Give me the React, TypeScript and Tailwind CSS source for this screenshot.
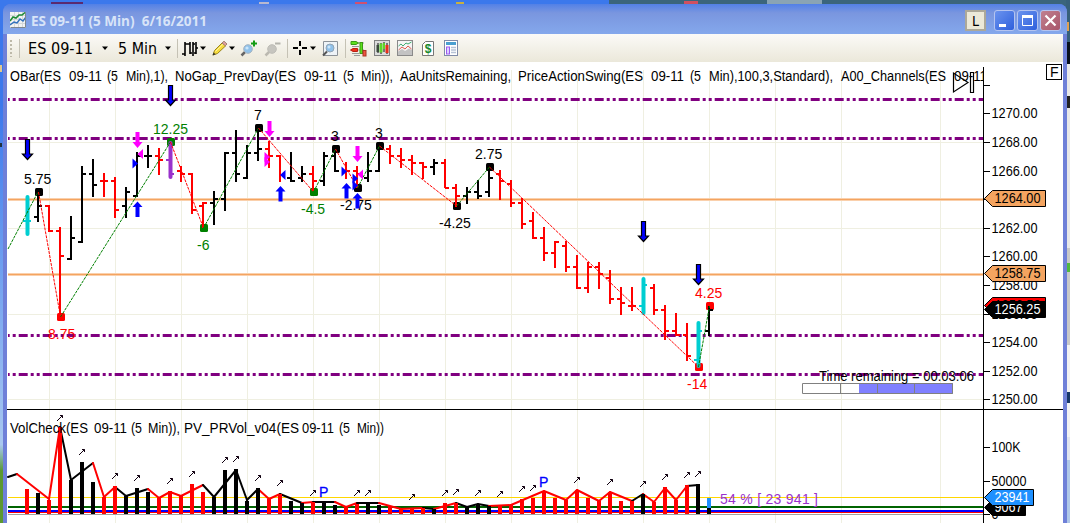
import React from "react";

type Color = "k" | "r" | "c" | "p";

const COLORS: Record<string, string> = {
    k: "#000000",
    r: "#ff0000",
    c: "#00ced1",
    p: "#9932cc",
    g: "#008000",
};

const FONT = "'Liberation Sans', Arial, sans-serif";

// color, high, low, open, close (all y values)
const BARS: [Color, number, number, number, number][] = [
    ["c", 197, 234, 221, 221],
    ["k", 192, 222, 217, 206],
    ["r", 205, 232, 206, 231],
    ["r", 227, 317, 231, 256],
    ["k", 216, 260, 259, 238],
    ["k", 166, 243, 242, 174],
    ["k", 159, 197, 174, 185],
    ["r", 173, 197, 181, 181],
    ["r", 177, 218, 181, 210],
    ["k", 187, 218, 206, 192],
    ["k", 152, 197, 196, 156],
    ["k", 145, 168, 156, 156],
    ["r", 148, 175, 156, 160],
    ["p", 143, 177, 160, 174],
    ["r", 166, 182, 171, 174],
    ["r", 173, 214, 174, 210],
    ["r", 202, 228, 206, 203],
    ["k", 191, 225, 203, 199],
    ["k", 152, 211, 199, 153],
    ["k", 130, 182, 153, 174],
    ["k", 145, 179, 178, 153],
    ["k", 128, 161, 153, 149],
    ["r", 141, 168, 149, 156],
    ["r", 155, 182, 156, 175],
    ["k", 152, 182, 178, 181],
    ["k", 166, 182, 178, 174],
    ["r", 166, 191, 174, 181],
    ["k", 152, 186, 181, 156],
    ["k", 149, 172, 156, 171],
    ["r", 162, 179, 171, 171],
    ["r", 166, 188, 171, 174],
    ["k", 152, 182, 178, 171],
    ["k", 147, 172, 171, 149],
    ["r", 145, 164, 149, 156],
    ["r", 148, 168, 156, 160],
    ["r", 155, 175, 160, 163],
    ["r", 162, 179, 163, 167],
    ["k", 159, 175, 167, 163],
    ["r", 159, 188, 163, 188],
    ["r", 184, 207, 188, 196],
    ["k", 187, 204, 196, 192],
    ["k", 180, 199, 192, 196],
    ["k", 167, 197, 192, 178],
    ["r", 170, 200, 174, 181],
    ["r", 180, 207, 184, 203],
    ["r", 198, 229, 203, 224],
    ["r", 212, 239, 221, 238],
    ["r", 227, 261, 238, 253],
    ["r", 241, 268, 253, 242],
    ["r", 241, 272, 246, 267],
    ["r", 255, 289, 267, 288],
    ["r", 262, 293, 288, 267],
    ["r", 262, 289, 267, 274],
    ["r", 270, 304, 278, 299],
    ["r", 287, 315, 299, 303],
    ["r", 287, 311, 306, 306],
    ["c", 279, 313, 306, 285],
    ["r", 284, 315, 288, 310],
    ["r", 305, 340, 310, 331],
    ["r", 313, 336, 331, 335],
    ["r", 323, 361, 335, 356],
    ["c", 323, 366, 360, 331],
    ["k", 306, 336, 331, 310],
];

// x, y, dot color, label, label x, label baseline
const SWINGS: [number, number, string, string, number, number][] = [
    [38, 192, "k", "5.75", 24, 184],
    [60, 317, "r", "8.75", 48, 339],
    [170, 142, "g", "12.25", 153, 134],
    [203, 228, "g", "-6", 197, 250],
    [258, 128, "k", "7", 254, 120],
    [313, 192, "g", "-4.5", 301, 214],
    [335, 149, "k", "3", 331, 141],
    [357, 188, "k", "-2.75", 340, 210],
    [379, 146, "k", "3", 375, 138],
    [456, 206, "k", "-4.25", 439, 228],
    [489, 167, "k", "2.75", 475, 159],
    [698, 367, "r", "-14", 687, 389],
    [709, 306, "r", "4.25", 695, 298],
];

// volume bar tops, one for each price bar
const VOLUME: [Color, number][] = [
    ["r", 489], ["k", 493], ["r", 500], ["r", 427], ["k", 480], ["k", 462],
    ["k", 482], ["r", 497], ["r", 486], ["k", 496], ["k", 488], ["k", 492],
    ["r", 498], ["r", 491], ["r", 496], ["r", 484], ["r", 492], ["k", 497],
    ["k", 470], ["k", 469], ["k", 501], ["k", 488], ["r", 499], ["r", 494],
    ["k", 501], ["k", 503], ["r", 502], ["k", 502], ["k", 505], ["r", 507],
    ["r", 504], ["k", 503], ["k", 505], ["r", 506], ["r", 509], ["r", 508],
    ["r", 508], ["k", 509], ["r", 503], ["r", 503], ["k", 507], ["k", 504],
    ["k", 506], ["r", 505], ["r", 505], ["r", 499], ["r", 498], ["r", 491],
    ["r", 498], ["r", 500], ["r", 490], ["r", 498], ["r", 501], ["r", 492],
    ["r", 501], ["r", 501], ["k", 494], ["r", 502], ["r", 487], ["r", 500],
    ["r", 485], ["k", 484], ["k", 508],
];

// each point carries the color of the segment that leads to it
const VOLUME_LINE: [number, number, Color][] = [
    [8, 477, "k"], [17, 474, "k"], [49, 499, "r"], [60, 427, "r"],
    [71, 480, "k"], [93, 463, "k"], [104, 497, "r"], [115, 487, "r"],
    [126, 496, "k"], [148, 489, "k"], [159, 498, "r"], [170, 492, "r"],
    [181, 496, "r"], [203, 485, "r"], [214, 497, "k"], [236, 470, "k"],
    [247, 500, "k"], [258, 489, "k"], [269, 499, "r"], [280, 494, "r"],
    [302, 503, "k"], [313, 502, "r"], [335, 502, "k"], [346, 507, "r"],
    [357, 503, "r"], [379, 503, "k"], [401, 509, "r"], [423, 508, "r"],
    [434, 509, "k"], [456, 503, "r"], [467, 507, "k"], [478, 504, "k"],
    [489, 506, "k"], [511, 505, "r"], [544, 491, "r"], [566, 500, "r"],
    [577, 490, "r"], [599, 501, "r"], [610, 492, "r"], [632, 501, "r"],
    [643, 494, "k"], [654, 502, "r"], [665, 488, "r"], [676, 500, "r"],
    [687, 486, "r"], [698, 485, "k"],
];

const VOLUME_MARKS: [number, number][] = [
    [60, 418], [82, 452], [115, 476], [137, 478], [170, 481], [192, 474],
    [225, 460], [236, 459], [258, 478], [280, 483], [313, 493], [357, 493],
    [368, 493], [412, 497], [445, 493], [456, 492], [478, 493], [500, 494],
    [522, 489], [533, 488], [577, 480], [610, 482], [643, 484], [665, 477],
    [687, 475], [698, 474],
];

const GRID_X = [49, 115, 181, 247, 313, 379, 445, 511, 577, 643, 709, 775, 841, 940];
const GRID_Y = [142, 228, 314, 399];

// 1264.00 is covered by its price tag
const AXIS: [string, number][] = [
    ["", 85], ["1270.00", 113], ["1268.00", 142], ["1266.00", 171],
    ["", 199], ["1262.00", 228], ["1260.00", 256], ["1258.00", 285],
    ["1256.00", 314], ["1254.00", 342], ["1252.00", 371], ["1250.00", 399],
    ["100K", 447], ["50000", 481], ["0", 514],
];

// text, x, width
const HEADER: [string, number, number][] = [
    ["OBar(ES", 10, 51], ["09-11", 69, 33], ["(5", 107, 11], ["Min),1),", 126, 42],
    ["NoGap_PrevDay(ES", 175, 121], ["09-11", 304, 33], ["(5", 343, 11],
    ["Min)),", 361, 32], ["AaUnitsRemaining,", 400, 111],
    ["PriceActionSwing(ES", 518, 125], ["09-11", 651, 33], ["(5", 690, 11],
    ["Min),100,3,Standard),", 709, 124], ["A00_Channels(ES", 841, 105],
    ["09-11", 954, 33],
];

const VOLUME_HEADER: [string, number, number][] = [
    ["VolCheck(ES", 10, 78], ["09-11", 94, 33], ["(5", 131, 11], ["Min)),", 148, 32],
    ["PV_PRVol_v04(ES", 184, 115], ["09-11", 302, 32], ["(5", 339, 11],
    ["Min))", 357, 27],
];

const barX = (i: number) => 27 + i * 11;

const SmallText: React.FC<{
    x: number;
    y: number;
    w?: number;
    fill?: string;
    children: React.ReactNode;
}> = ({ x, y, w, fill = "#000", children }) => (
    <text
        x={x}
        y={y}
        fill={fill}
        fontFamily={FONT}
        fontSize={14}
        textLength={w}
        lengthAdjust="spacingAndGlyphs"
    >
        {children}
    </text>
);

const PriceBar: React.FC<{ i: number; bar: (typeof BARS)[number] }> = ({ i, bar }) => {
    const [color, high, low, open, close] = bar;
    const x = barX(i);
    const thick = color === "c" || color === "p";
    return (
        <g stroke={COLORS[color]} strokeWidth={2} shapeRendering="crispEdges">
            <path d={`M${x - 4} ${open}H${x}M${x} ${close}H${x + 4}`} />
            <line
                x1={thick ? x + 0.5 : x}
                x2={thick ? x + 0.5 : x}
                y1={high}
                y2={low}
                strokeWidth={thick ? 4 : 2}
                strokeLinecap={thick ? "round" : "butt"}
                shapeRendering={thick ? "auto" : "crispEdges"}
            />
        </g>
    );
};

const SignalArrow: React.FC<{ x: number; y: number }> = ({ x, y }) => (
    <path
        d={`M${x - 1.5} ${y + 0.5}h4v14.5h3l-5 5.5l-5-5.5h3z`}
        fill="#0000ff"
        stroke="#000"
        strokeWidth={1.2}
    />
);

const SmallArrow: React.FC<{ x: number; y: number; up?: boolean }> = ({ x, y, up }) => (
    <path
        d={
            up
                ? `M${x + 0.5} ${y}l5 5.5h-3v10h-4v-10h-3z`
                : `M${x - 1.5} ${y}h4v10h3l-5 6l-5-6h3z`
        }
        fill={up ? "#0000ff" : "#ff00ff"}
    />
);

const Tri: React.FC<{ x: number; y: number; left?: boolean; fill: string }> = ({
    x,
    y,
    left,
    fill,
}) => (
    <path
        d={left ? `M${x} ${y}l5.5-5v10z` : `M${x} ${y}l-5.5-5v10z`}
        fill={fill}
    />
);

const PriceTag: React.FC<{
    y: number;
    right: number;
    fill: string;
    color: string;
    text: string;
}> = ({ y, right, fill, color, text }) => (
    <g>
        <path
            d={`M984.5 ${y + 8.5}l8-8H${right}v16H992.5z`}
            fill={fill}
            stroke="#000"
        />
        <SmallText x={994.5} y={y + 13} w={text.length > 5 ? 46 : text.length * 7} fill={color}>
            {text}
        </SmallText>
    </g>
);

const Chart: React.FC = () => (
    <svg width={1056} height={461} viewBox="7 62 1056 461" className="block bg-white">
        <g fill="#efefe1">
            {GRID_X.map((x) => (
                <rect key={x} x={x} y={70} width={1} height={453} />
            ))}
            {GRID_Y.map((y) => (
                <rect key={y} x={8} y={y} width={975} height={1} />
            ))}
        </g>

        {/* channel lines */}
        {[199, 274].map((y) => (
            <g key={y}>
                <rect x={8} y={y - 1} width={975} height={3} fill="#fad0ac" />
                <rect x={8} y={y} width={975} height={1} fill="#f4a460" />
            </g>
        ))}
        {[99.5, 138.5, 335.5, 374.5].map((y) => (
            <line
                key={y}
                x1={8}
                x2={983}
                y1={y}
                y2={y}
                stroke="#800080"
                strokeWidth={3}
                strokeDasharray="9 3 3 3 3 3"
                strokeDashoffset={13.3}
            />
        ))}

        {/* swing dots sit under the bars, swing legs over them */}
        {SWINGS.map(([x, y, c]) => (
            <rect key={x} x={x - 3} y={y - 4} width={8} height={8} rx={1.5} fill={COLORS[c]} />
        ))}
        {BARS.map((bar, i) => (
            <PriceBar key={i} i={i} bar={bar} />
        ))}
        <line x1={8} y1={249} x2={38} y2={192} stroke="#008000" strokeDasharray="3 1" />
        {SWINGS.slice(1).map(([x, y], i) => {
            const [px, py] = SWINGS[i];
            return (
                <line
                    key={x}
                    x1={px + 0.5}
                    y1={py}
                    x2={x + 0.5}
                    y2={y}
                    stroke={y > py ? "#ff0000" : "#008000"}
                    strokeDasharray="3 1"
                />
            );
        })}

        <SignalArrow x={27} y={139} />
        <SignalArrow x={170} y={85} />
        <SignalArrow x={643} y={221} />
        <SignalArrow x={698} y={264} />
        <SmallArrow x={137} y={132} />
        <SmallArrow x={269} y={121} />
        <SmallArrow x={357} y={146} />
        <SmallArrow x={137} y={201.5} up />
        <SmallArrow x={280} y={186} up />
        <SmallArrow x={346} y={183} up />
        <Tri x={137.5} y={154} left fill="#ff00ff" />
        <Tri x={138} y={163.5} fill="#0000ff" />
        <Tri x={270} y={157} fill="#ff00ff" />
        <Tri x={270} y={162} fill="#ff00ff" />
        <Tri x={280} y={175} left fill="#0000ff" />
        <Tri x={347} y={171.5} fill="#0000ff" />
        <Tri x={358} y={178.5} fill="#0000ff" />
        <Tri x={358} y={185.5} fill="#0000ff" />
        <Tri x={357.5} y={174.5} left fill="#ff00ff" />

        {SWINGS.map(([x, , c, label, lx, ly]) => (
            <text key={x} x={lx} y={ly} fontSize={14} fontFamily={FONT} fill={COLORS[c]}>
                {label}
            </text>
        ))}
        <SmallArrow x={357} y={193} up />

        {/* bar timer */}
        <rect x={859} y={383} width={94} height={11} fill="#8080ff" />
        <path
            d="M802.5 383.5H952.5V393.5H802.5ZM840.5 383.5V393.5M877.5 383.5V393.5M914.5 383.5V393.5"
            fill="none"
            stroke="#808080"
        />
        <SmallText x={819} y={381} w={155}>
            Time remaining = 00:03:06
        </SmallText>

        {/* volume panel */}
        <rect x={8} y={497} width={975} height={1} fill="#ffd700" />
        <rect x={8} y={506} width={975} height={2} fill="#006400" />
        <rect x={8} y={510} width={975} height={2} fill="#0000ff" />
        <rect x={8} y={512} width={975} height={1} fill="#ff0000" />
        <rect x={8} y={514} width={975} height={1} fill="#a0a0a0" />
        {VOLUME_LINE.slice(1).map(([x, y, c], i) => (
            <line
                key={x}
                x1={VOLUME_LINE[i][0]}
                y1={VOLUME_LINE[i][1]}
                x2={x}
                y2={y}
                stroke={COLORS[c]}
                strokeWidth={2}
                strokeLinecap="round"
            />
        ))}
        {VOLUME.map(([c, top], i) => (
            <rect
                key={i}
                x={barX(i) - 2}
                y={top}
                width={4}
                height={514 - top}
                fill={COLORS[c]}
            />
        ))}
        <rect x={707} y={498} width={4} height={10} fill="#1e90ff" />
        {VOLUME_MARKS.map(([x, y]) => (
            <path
                key={x}
                d={`M${x - 3} ${y + 3}l5.5-5.5M${x} ${y - 2.5}h2.5v2.5`}
                fill="none"
                stroke="#100010"
            />
        ))}
        <g fontFamily={FONT} fontSize={14}>
            <text x={319} y={497} fill="#0000ff" stroke="#0000ff" strokeWidth={0.3}>
                P
            </text>
            <text x={539} y={487} fill="#0000ff" stroke="#0000ff" strokeWidth={0.3}>
                P
            </text>
            <text x={720} y={504} fill="#9932cc" textLength={98}>
                54 % [ 23 941 ]
            </text>
        </g>

        {HEADER.map(([t, x, w]) => (
            <SmallText key={x} x={x} y={80.5} w={w}>
                {t}
            </SmallText>
        ))}
        {VOLUME_HEADER.map(([t, x, w]) => (
            <SmallText key={x} x={x} y={433} w={w}>
                {t}
            </SmallText>
        ))}
        <path
            d="M953.5 73V92L968 82.5ZM970.5 72.5h3v20h-3z"
            fill="none"
            stroke="#000"
            strokeWidth={1.2}
        />

        {/* axis */}
        <rect x={984} y={62} width={79} height={347} fill="#fff" />
        <rect x={984} y={410} width={79} height={113} fill="#fff" />
        <rect x={983} y={67} width={1} height={456} fill="#000" />
        <rect x={7} y={409} width={1056} height={1} fill="#000" />
        {AXIS.map(([label, y]) => (
            <g key={y}>
                <rect x={984} y={y} width={6} height={1} fill="#000" />
                {label && (
                    <SmallText
                        x={991.5}
                        y={y + 5}
                        w={label.length > 5 ? 46 : label === "100K" ? 29 : label.length * 7}
                    >
                        {label}
                    </SmallText>
                )}
            </g>
        ))}
        <PriceTag y={190} right={1045.5} fill="#f4a460" color="#000" text="1264.00" />
        <PriceTag y={265} right={1045.5} fill="#f4a460" color="#000" text="1258.75" />
        <PriceTag y={297} right={1045.5} fill="#ff0000" color="#000" text="1256.50" />
        <PriceTag y={301} right={1045.5} fill="#000000" color="#fff" text="1256.25" />
        <PriceTag y={499} right={1025.5} fill="#000000" color="#fff" text="9067" />
        <PriceTag y={489} right={1033.5} fill="#1e90ff" color="#fff" text="23941" />
        <rect x={1046.5} y={64.5} width={15} height={15} fill="#fff" stroke="#000" />
        <SmallText x={1050} y={77}>
            F
        </SmallText>
    </svg>
);

const Separator: React.FC<{ className: string }> = ({ className }) => (
    <div className={`h-[19px] w-px shrink-0 bg-[#c5c2b5] ${className}`} />
);

const Caret: React.FC<{ className: string }> = ({ className }) => (
    <svg width={6} height={16} viewBox="0 0 6 16" className={`shrink-0 ${className}`}>
        <path d="M0 6.5H6L3 10Z" fill="#000" />
    </svg>
);

const Icon: React.FC<{ w: number; className: string; children: React.ReactNode }> = ({
    w,
    className,
    children,
}) => (
    <svg
        width={w}
        height={17}
        viewBox={`0 0 ${w} 17`}
        className={`shrink-0 ${className}`}
        fill="none"
    >
        {children}
    </svg>
);

const ToolbarLabel: React.FC<{ w: number; className: string; children: React.ReactNode }> = ({
    w,
    className,
    children,
}) => (
    <svg width={w + 1} height={20} className={`shrink-0 ${className}`}>
        <text
            x={0}
            y={16}
            fontSize={16}
            fontFamily="'DejaVu Sans Condensed', 'Noto Sans', sans-serif"
            textLength={w}
            lengthAdjust="spacingAndGlyphs"
        >
            {children}
        </text>
    </svg>
);

const Toolbar: React.FC = () => (
    <div className="flex h-7 shrink-0 items-center bg-linear-to-b from-[#fbfaf7] to-[#ebe8da] text-black">
        <Icon w={2} className="ml-[3px]">
            <path d="M1 0V17" stroke="#bdb9a9" strokeWidth={2} strokeDasharray="2 2" />
        </Icon>
        <Separator className="ml-[7px]" />
        <ToolbarLabel w={65} className="ml-2">
            ES 09-11
        </ToolbarLabel>
        <Caret className="ml-2" />
        <ToolbarLabel w={39} className="ml-2.5">
            5 Min
        </ToolbarLabel>
        <Caret className="ml-[7px]" />
        <Separator className="ml-1.5" />
        <Icon w={16} className="ml-1">
            <path
                d="M3 2V16M0 14H3M3 4H6M8 2V14M5 4H8M8 13H10M11 2V16M11 4H13M14 2V14M12 13H14M14 8H16"
                stroke="#000"
                strokeWidth={1.6}
            />
        </Icon>
        <Caret className="ml-0.5" />
        <Icon w={17} className="ml-[5px]">
            <path d="M2 15L3.5 10.5L11.5 2.5L15 5.5L6.5 13.5Z" fill="#f7dc3c" stroke="#9a8420" />
            <path d="M4.5 11.5L12.5 3.8" stroke="#fff6a8" />
            <path d="M11 3L13 1.2L16 4L14.3 5.8Z" fill="#e0a0a0" stroke="#a08070" />
            <path d="M1.5 15.5L2.6 12.5L4.6 14.3Z" fill="#333" />
        </Icon>
        <Caret className="ml-px" />
        <Icon w={17} className="ml-[5px]">
            <path d="M1.5 15.5L5 12" stroke="#666" strokeWidth={2.5} />
            <circle cx={8} cy={9} r={4.3} fill="#8fc1ea" stroke="#a5b3c0" />
            <circle cx={7} cy={8} r={1.6} fill="#cbe6fa" />
            <path d="M14 0.5V6.5M11 3.5H17" stroke="#149c14" strokeWidth={2} />
        </Icon>
        <Icon w={17} className="ml-[7px]">
            <path d="M1.5 15.5L5 12" stroke="#bbb9b0" strokeWidth={2.5} />
            <circle cx={8} cy={9} r={4.3} fill="#c6c5bf" stroke="#bdbcb6" />
            <path d="M11 3.5H16.5" stroke="#b5b4ad" strokeWidth={2} />
        </Icon>
        <Separator className="ml-1.5" />
        <Icon w={14} className="ml-[5px]">
            <path d="M7 1V6M7 10V15M0 8H5M9 8H14" stroke="#000" strokeWidth={2} />
        </Icon>
        <Caret className="ml-[3px]" />
        <Icon w={16} className="ml-1.5">
            <path d="M1.5 1.5H15.5V15.5H1.5Z" fill="#eef3f7" stroke="#8c9298" />
            <path d="M1 15.5L5 11.5" stroke="#555" strokeWidth={2} />
            <circle cx={8} cy={8} r={4} fill="#8fc1ea" stroke="#93a5b5" />
            <circle cx={7} cy={7} r={1.5} fill="#cbe6fa" />
        </Icon>
        <Separator className="ml-[7px]" />
        <Icon w={17} className="ml-1">
            <path d="M8 3H14M2 6.5H9M8 10H14M2 13.5H9M4 15.5H10" stroke="#999" />
            <path d="M1 1.5H6L8.5 3L6 4.5H1Z" fill="#5ce01c" stroke="#3b9a17" />
            <path d="M0.5 10L3 8.5H7.5V11.5H3Z" fill="#f0301c" stroke="#b81f12" />
            <rect x={10} y={2.5} width={2.5} height={11} fill="#5ce01c" stroke="#3b9a17" />
            <rect x={13} y={10.5} width={3} height={5.5} fill="#ee5540" stroke="#a83424" />
        </Icon>
        <Icon w={16} className="ml-[7px]">
            <rect x={0.5} y={0.5} width={15} height={15} fill="#dcdcdc" stroke="#808080" />
            <path d="M4 3V13M7 3V14M10 2V12M13 3V14" stroke="#111" />
            <rect x={2.5} y={5} width={2.5} height={7} fill="#3b4a3b" />
            <rect x={5.5} y={3.5} width={3} height={9} fill="#5fd42a" />
            <rect x={9} y={3} width={2} height={6} fill="#5fd42a" />
            <rect x={11.5} y={5} width={3} height={8} fill="#e8301c" />
        </Icon>
        <Icon w={16} className="ml-[7px]">
            <rect x={0.5} y={0.5} width={15} height={15} fill="#f5f5f5" stroke="#8a8a8a" />
            <path d="M1 11.5L5 9L8 11L12 8.5L15 10V15H1Z" fill="#c3c3c3" />
            <path d="M1.5 6L4 4L6 6L9 3L11 4L14.5 2" stroke="#41ad74" />
            <path d="M1.5 10L5 7L8 9L11 6L14.5 9" stroke="#df5a50" />
        </Icon>
        <Icon w={14} className="ml-2">
            <path d="M4.5 1.5H12.5V15.5H1.5V4.5Z" fill="#fff" stroke="#777" />
            <text x={3.8} y={13} fontSize={12} fontWeight={700} fontFamily={FONT} fill="#16882b">
                $
            </text>
        </Icon>
        <Icon w={14} className="ml-[9px]">
            <rect x={0.5} y={0.5} width={13} height={15} fill="#fff" stroke="#7f8ba8" />
            <rect x={2} y={2} width={10} height={3} fill="#4a9fd0" />
            <rect x={2.5} y={7} width={3} height={7} fill="#ddd0ff" stroke="#9a5cf0" />
            <path d="M7 7.5H12M7 10H12M7 12.5H12" stroke="#b6c3d6" strokeWidth={1.5} />
        </Icon>
    </div>
);

const CaptionButton: React.FC<{ className: string; children: React.ReactNode }> = ({
    className,
    children,
}) => (
    <div className={`h-[21px] w-[21px] rounded-[3px] border border-[#b4c4f0] ${className}`}>
        <svg width={19} height={19} viewBox="0 0 19 19" fill="none" stroke="#fff">
            {children}
        </svg>
    </div>
);

const TitleBar: React.FC = () => (
    <div className="flex h-[30px] shrink-0 items-start">
        <svg width={16} height={16} viewBox="0 0 16 16" fill="none" className="mt-2 ml-[3px]">
            <rect width={16} height={16} fill="#f2f3f2" />
            <path d="M0 3.5H16M0 7.5H16M0 11.5H16M4.5 0V16M8.5 0V16M12.5 0V16" stroke="#d5d8da" />
            <path d="M0 13L4 10L7 11L10 7L13 9L16 5" stroke="#3272bd" strokeWidth={1.4} />
            <path d="M0 9L3 5L6 6L9 3L12 3L15 0.5" stroke="#1d8a35" strokeWidth={1.6} />
            <path d="M0.5 15.5H15.5V0" stroke="#7d8790" />
        </svg>
        <svg width={180} height={22} className="mt-1 ml-[5px]">
            <text
                x={0}
                y={18}
                fontSize={14.5}
                fontWeight={700}
                fontFamily="'Open Sans', 'Noto Sans', sans-serif"
                fill="#d8e4f8"
                textLength={176}
                lengthAdjust="spacingAndGlyphs"
            >
                {"ES 09-11 (5 Min)\u00a0 6/16/2011"}
            </text>
        </svg>
        <div className="mt-1.5 mr-0.5 ml-auto flex gap-[2px]">
            <div className="mr-1.5 flex h-[21px] w-[21px] items-center justify-center border-2 border-[#aca899] bg-[#ece9d8] font-['DejaVu_Sans_Condensed'] text-sm">
                L
            </div>
            <CaptionButton className="bg-linear-to-br from-[#6b93ee] to-[#2f5fdc]">
                <path d="M4 14.5H11" strokeWidth={3} />
            </CaptionButton>
            <CaptionButton className="bg-linear-to-br from-[#6b93ee] to-[#2f5fdc]">
                <path d="M4.5 5.5H14.5V14.5H4.5Z" />
                <path d="M4 5.5H15" strokeWidth={3} />
            </CaptionButton>
            <CaptionButton className="bg-linear-to-br from-[#c08090] to-[#a8566a]">
                <path d="M4.5 4.5L14.5 14.5M14.5 4.5L4.5 14.5" strokeWidth={2.2} />
            </CaptionButton>
        </div>
    </div>
);

/**
 * Bits of the desktop and of other windows that show round the chart window.
 */
const Backdrop: React.FC = () => (
    <svg width={1070} height={523} className="absolute inset-0">
        <rect x={51} y={2} width={32} height={2} fill="#5a2a70" />
        <rect x={259} y={2} width={10} height={2} fill="#b8b8d0" />
        <rect x={355} y={2} width={12} height={2} fill="#d05070" />
        <rect x={456} y={2} width={8} height={2} fill="#c8b040" />
        <rect x={609} y={0} width={461} height={12} fill="#3b657c" />
        <rect x={684} y={1} width={14} height={3} fill="#d05060" />
        <rect x={767} y={0} width={55} height={4} fill="#8aa4b4" />
        <rect x={0} y={65} width={2} height={7} fill="#e0c890" />
        <rect x={0} y={143} width={2} height={4} fill="#203040" />
        <rect x={1066} y={0} width={4} height={42} fill="#37607a" />
        <rect x={1067} y={22} width={2} height={9} fill="#e0a050" />
        <rect x={1067} y={42} width={3} height={22} fill="#08101c" />
        <rect x={1067} y={64} width={3} height={184} fill="#e8e8e8" />
        <rect x={1067} y={96} width={3} height={12} fill="#222" />
        <rect x={1067} y={248} width={3} height={97} fill="#c8c8c8" />
        <rect x={1067} y={263} width={3} height={9} fill="#50b840" />
        <rect x={1067} y={345} width={3} height={92} fill="#f2f2f2" />
        <rect x={1067} y={392} width={3} height={11} fill="#183868" />
        <rect x={1067} y={437} width={3} height={23} fill="#e0e4ee" />
        <rect x={1067} y={460} width={3} height={63} fill="#b0c8e8" />
    </svg>
);

export default function App() {
    return (
        <div className="relative h-[523px] w-[1070px] overflow-hidden bg-linear-to-b from-[#3b78ec] from-20% via-[#a9c8f0] via-85% to-[#5c9830] to-90%">
            <Backdrop />
            <div className="relative mt-1 ml-[3px] flex h-[519px] w-[1064px] flex-col rounded-t-lg bg-[#6f80d8] px-1">
                <div className="absolute inset-x-0 top-0 h-[30px] rounded-t-lg bg-linear-to-b from-[#5280e6] via-[#7a96df] via-30% to-[#84a8ec]" />
                <div className="relative flex flex-col">
                    <TitleBar />
                    <Toolbar />
                    <Chart />
                </div>
            </div>
        </div>
    );
}
